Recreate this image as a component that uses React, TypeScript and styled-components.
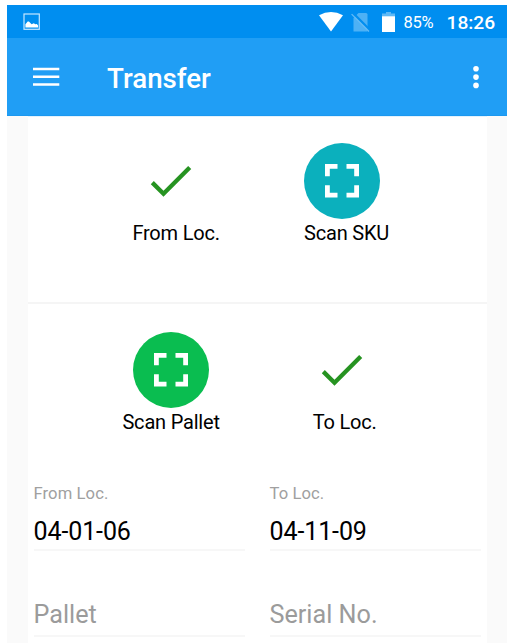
import React from "react";
import styled, { createGlobalStyle } from "styled-components";

const GlobalStyle = createGlobalStyle`
  * { box-sizing: border-box; }
  html, body { margin: 0; background: #fff; overflow: hidden; }
  body { font-family: Roboto, "Liberation Sans", sans-serif; color: #000; }
  svg { display: block; flex: none; }
`;

const Screen = styled.main`
  width: 500px;
  height: 638px;
  margin: 5px 0 0 7px;
  display: flex;
  flex-direction: column;
  background: #fafafa;
  overflow: hidden;
`;

const StatusBar = styled.header`
  height: 33px;
  flex: none;
  display: flex;
  align-items: center;
  padding: 0 10.5px 0 16px;
  background: #008ef0;
  color: #fff;
`;

const StatusIcons = styled.div`
  display: flex;
  align-items: center;
  margin-left: auto;
  gap: 8.5px;
`;

const BatteryText = styled.span`
  width: 31px;
  margin-left: 8px;
  font-size: 16.5px;
  line-height: 20px;
  letter-spacing: -0.3px;
  padding-top: 2px;
  white-space: nowrap;
`;

const Clock = styled.time`
  width: 50px;
  margin-left: 12px;
  padding-top: 2px;
  font-size: 19.2px;
  font-weight: 500;
  line-height: 22px;
  white-space: nowrap;
`;

const AppBar = styled.nav`
  height: 78px;
  flex: none;
  display: flex;
  align-items: center;
  padding: 0 28px 0 25.5px;
  background: #209ef5;
  color: #fff;
  border-bottom: 1px solid #1b98f0;
`;

const Title = styled.h1`
  margin: 5px auto 0 47.5px;
  font-size: 27.7px;
  font-weight: 500;
  line-height: 32px;
`;

const IconButton = styled.button`
  display: flex;
  padding: 0;
  border: 0;
  background: none;
  color: inherit;
`;

const Card = styled.section`
  flex: 1;
  margin: 0 20.5px 0 21px;
  border-top: 1px solid #e2f2fd;
  background: #fff;
`;

const ActionRow = styled.div<{ $height: number; $top: number; $divided?: boolean }>`
  height: ${(p) => p.$height}px;
  padding: ${(p) => p.$top}px 0 0 57.6px;
  display: grid;
  grid-template-columns: 171px 171px;
  align-content: start;
  border-bottom: ${(p) => (p.$divided ? "2px solid #f5f5f5" : "0")};
`;

const Action = styled.button`
  display: flex;
  flex-direction: column;
  align-items: center;
  padding: 0;
  border: 0;
  background: none;
  font: inherit;
  color: inherit;
`;

const IconDisc = styled.span<{ $color?: string }>`
  width: 76px;
  height: 76px;
  display: grid;
  place-items: center;
  border-radius: 50%;
  background: ${(p) => p.$color ?? "transparent"};
`;

const ActionLabel = styled.span<{ $indent: number }>`
  margin-top: 2px;
  padding-left: ${(p) => p.$indent * 2}px;
  font-size: 20px;
  line-height: 24px;
  letter-spacing: -0.2px;
  white-space: nowrap;
`;

const Fields = styled.div`
  display: grid;
  grid-template-columns: 211px 211px;
  grid-template-rows: 80px 86px;
  column-gap: 25px;
  padding-left: 5.5px;
`;

const Field = styled.div`
  display: flex;
  flex-direction: column;
  justify-content: flex-end;
  border-bottom: 2px solid #f7f7f7;
  white-space: nowrap;
`;

const FieldLabel = styled.label`
  font-size: 16.6px;
  line-height: 20px;
  color: #a0a0a0;
  letter-spacing: 0.1px;
`;

const FieldValue = styled.span<{ $empty?: boolean }>`
  margin-top: ${(p) => (p.$empty ? 0 : 13.5)}px;
  font-size: ${(p) => (p.$empty ? 25.2 : 25)}px;
  line-height: 30px;
  letter-spacing: ${(p) => (p.$empty ? 0 : -0.1)}px;
  padding-bottom: ${(p) => (p.$empty ? 5 : 2)}px;
  color: ${(p) => (p.$empty ? "#9b9b9b" : "#000")};
`;

const PictureIcon = () => (
  <svg width="18" height="18" viewBox="0 0 18 18">
    <rect x="1" y="1" width="15.3" height="15.3" fill="none" stroke="#c5e6ff" strokeWidth="1.2" />
    <path d="M2.4 14.4v-3.2L4.7 8.6h1.2l2.7 2.6 2.2-1 1.5 1 1.5-.2 1.3 1.4v2z" fill="#fff" />
  </svg>
);

const WifiIcon = () => (
  <svg width="24" height="20" viewBox="0 0 24 20">
    <path d="M0 3.2Q12-3.2 24 3.2L12 19.5z" fill="#fff" />
  </svg>
);

const NoSimIcon = () => (
  <svg width="22" height="20" viewBox="0 0 22 20">
    <path d="M2.5 6L7.5 1H15a1.5 1.5 0 0 1 1.5 1.5v17h-14z" fill="#4db1f5" />
    <path d="M1.7 .7L19 18" stroke="#008ef0" strokeWidth="2.2" />
    <path d="M.6 2.1L18 19.5" stroke="#63bbf6" strokeWidth="1.3" />
  </svg>
);

const BatteryIcon = () => (
  <svg width="14" height="20" viewBox="0 0 14 20">
    <path d="M4 0h5v1.5h4V5H0V1.5h4z" fill="#5eb9f6" />
    <path d="M0 4.3h13V20H0z" fill="#fff" />
  </svg>
);

const MenuIcon = () => (
  <svg width="27" height="20" viewBox="0 0 27 20">
    <path d="M0 2h26.3M0 9.8h26.3M0 17.5h26.3" stroke="#fff" strokeWidth="2.6" />
  </svg>
);

const MoreIcon = () => (
  <svg width="6" height="24" viewBox="0 0 6 24">
    <circle cx="3" cy="3.8" r="2.8" fill="#fff" />
    <circle cx="3" cy="12.1" r="2.8" fill="#fff" />
    <circle cx="3" cy="20.4" r="2.8" fill="#fff" />
  </svg>
);

const CheckIcon = () => (
  <svg width="42" height="34" viewBox="0 0 42 34">
    <path d="M2.3 18.6L13.5 29.7L39.7 3.5" fill="none" stroke="#269321" strokeWidth="4.3" />
  </svg>
);

const ScanIcon = () => (
  <svg width="34" height="36" viewBox="0 0 34 36">
    <path
      d="M2.4 13.3V3.4h10.1M21.5 3.4h10.1v9.9M31.6 22.3v9.9H21.5M12.5 32.2H2.4v-9.9"
      fill="none"
      stroke="#fff"
      strokeWidth="4.8"
    />
  </svg>
);

export default function App() {
  return (
    <>
      <GlobalStyle />
      <Screen>
        <StatusBar>
          <PictureIcon />
          <StatusIcons>
            <WifiIcon />
            <NoSimIcon />
            <BatteryIcon />
          </StatusIcons>
          <BatteryText>85%</BatteryText>
          <Clock>18:26</Clock>
        </StatusBar>
        <AppBar>
          <IconButton aria-label="Menu"><MenuIcon /></IconButton>
          <Title>Transfer</Title>
          <IconButton aria-label="More options"><MoreIcon /></IconButton>
        </AppBar>
        <Card>
          <ActionRow $height={187} $top={25.5} $divided>
            <Action>
              <IconDisc><CheckIcon /></IconDisc>
              <ActionLabel $indent={5}>From Loc.</ActionLabel>
            </Action>
            <Action>
              <IconDisc $color="#0bb0bd"><ScanIcon /></IconDisc>
              <ActionLabel $indent={4.5}>Scan SKU</ActionLabel>
            </Action>
          </ActionRow>
          <ActionRow $height={167} $top={27.5}>
            <Action>
              <IconDisc $color="#0abd50"><ScanIcon /></IconDisc>
              <ActionLabel $indent={0}>Scan Pallet</ActionLabel>
            </Action>
            <Action>
              <IconDisc><CheckIcon /></IconDisc>
              <ActionLabel $indent={2.5}>To Loc.</ActionLabel>
            </Action>
          </ActionRow>
          <Fields>
            <Field>
              <FieldLabel>From Loc.</FieldLabel>
              <FieldValue>04-01-06</FieldValue>
            </Field>
            <Field>
              <FieldLabel>To Loc.</FieldLabel>
              <FieldValue>04-11-09</FieldValue>
            </Field>
            <Field><FieldValue $empty>Pallet</FieldValue></Field>
            <Field><FieldValue $empty>Serial No.</FieldValue></Field>
          </Fields>
        </Card>
      </Screen>
    </>
  );
}
